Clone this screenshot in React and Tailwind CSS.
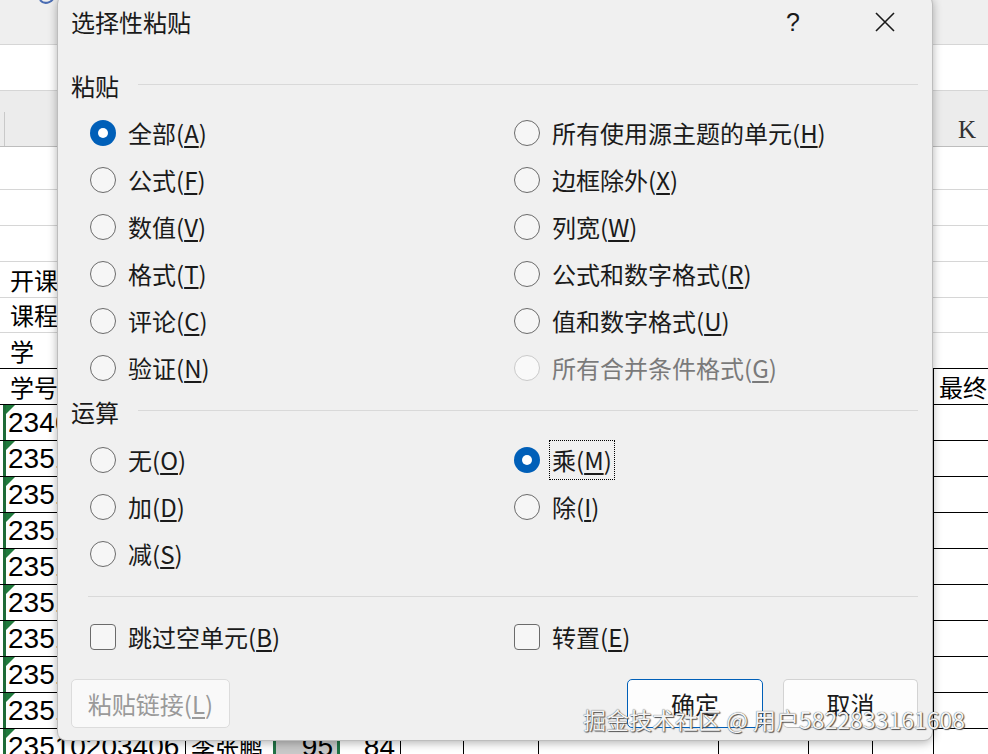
import clsx from "clsx";

const cjk = "font-['Noto_Sans_CJK_SC','Noto_Sans',sans-serif]";

function Mn({ children }) {
  return <span className="underline decoration-[1.5px] underline-offset-[3px]">{children}</span>;
}

function Label({ text, k }) {
  return (
    <>
      {text}(<Mn>{k}</Mn>)
    </>
  );
}

function Radio({ checked, disabled }) {
  if (checked) {
    return (
      <span className="w-[26px] h-[26px] shrink-0 rounded-full bg-[#005fb8] flex items-center justify-center">
        <span className="w-[10px] h-[10px] rounded-full bg-white" />
      </span>
    );
  }
  return (
    <span
      className={clsx(
        "w-[26px] h-[26px] shrink-0 rounded-full border-[1.5px]",
        disabled ? "border-[#cacaca] bg-[#f9f9f9]" : "border-[#6b6b6b] bg-[#f6f6f6]"
      )}
    />
  );
}

function Option({ text, k, checked, disabled, focus }) {
  return (
    <div className="h-[47px] flex items-center">
      <Radio checked={checked} disabled={disabled} />
      {focus ? (
        <span className="ml-[10px] px-[2px] h-[38px] flex items-center outline-1 outline-dotted outline-black">
          <Label text={text} k={k} />
        </span>
      ) : (
        <span className={clsx("ml-[12px]", disabled && "text-[#7a7a7a]")}>
          <Label text={text} k={k} />
        </span>
      )}
    </div>
  );
}

function Check({ text, k }) {
  return (
    <div className="h-[47px] flex items-center">
      <span className="w-[26px] h-[26px] shrink-0 rounded-[4px] border-[1.5px] border-[#6b6b6b] bg-[#f6f6f6]" />
      <span className="ml-[12px]">
        <Label text={text} k={k} />
      </span>
    </div>
  );
}

function Section({ title }) {
  return (
    <div className="h-[34px] flex items-center pl-[13px] pr-[14px]">
      <span>{title}</span>
      <div className="flex-1 h-px bg-[#d9d9d9] ml-[19px] mb-[4px]" />
    </div>
  );
}

function Triangle() {
  return (
    <span className="absolute top-0 left-0 w-0 h-0 border-t-[9px] border-t-[#1f7a3c] border-r-[9px] border-r-transparent" />
  );
}

function SheetRow({ h = "h-[36px]", line = "border-[#d6d6d6]", left, right, num, tri, rightLine }) {
  return (
    <div className={clsx("flex border-b", h, line)}>
      <div className="w-[185px] pl-[3px] flex">
        <div
          className={clsx(
            "flex-1 relative flex items-center overflow-hidden whitespace-nowrap",
            num ? "border-l-[3px] border-[#1d6b37] pl-[2px] font-['Liberation_Sans',sans-serif] text-[28px]" : "pl-[7px] text-[24px]"
          )}
        >
          {tri && <Triangle />}
          {left}
        </div>
      </div>
      <div className="flex-1" />
      <div
        className={clsx(
          "w-[55px] flex items-center pl-[5px] text-[24px] whitespace-nowrap overflow-hidden",
          rightLine && "border-l border-black"
        )}
      >
        {right}
      </div>
    </div>
  );
}

export default function App() {
  const ids = ["2346", "2351", "2351", "2351", "2351", "2351", "2351", "2351", "2351"];

  return (
    <div className={clsx("relative w-[988px] h-[754px] overflow-hidden bg-white text-black leading-none", cjk)}>
      {/* spreadsheet behind */}
      <div className="flex flex-col">
        <div className="h-[45px] bg-[#efefef] border-b border-[#d6d6d6] relative">
          <svg className="absolute left-[36px] top-[-14px]" width="22" height="22" viewBox="0 0 22 22">
            <path d="M4 14 A 8 8 0 0 0 18 8" fill="none" stroke="#4a6db3" strokeWidth="2" />
          </svg>
        </div>
        <div className="h-[46px] border-b border-[#d6d6d6]" />
        <div className="h-[56px] bg-[#ececec] border-b border-[#bdbdbd] flex flex-col justify-end">
          <div className="h-[34px] flex">
            <div className="w-[5px] border-r border-[#c9c9c9]" />
            <div className="flex-1" />
            <div className="w-[55px] flex items-center pl-[25px] font-['Liberation_Serif',serif] text-[25px] text-[#333]">
              K
            </div>
          </div>
        </div>
        <SheetRow h="h-[43px]" />
        <SheetRow />
        <SheetRow />
        <SheetRow left="开课" />
        <SheetRow h="h-[35px]" left="课程" />
        <SheetRow line="border-black" left="学" />
        <SheetRow line="border-black" left="学号" right="最终" rightLine />
        {ids.map((id, i) => (
          <SheetRow key={i} line="border-black" left={id} num tri rightLine />
        ))}
        <div className="h-[36px] flex">
          <div className="w-[185px] pl-[3px] flex">
            <div className="flex-1 relative flex items-center border-l-[3px] border-[#1d6b37] pl-[2px] font-['Liberation_Sans',sans-serif] text-[28px] whitespace-nowrap">
              <Triangle />
              23510203406
            </div>
          </div>
          <div className="w-[88px] border-l border-black flex items-center pl-[5px] text-[24px]">李张鹏</div>
          <div className="w-[67px] border-x-[3px] border-[#217346] bg-[#c8c8c8] flex items-center justify-end pr-[4px] font-['Liberation_Sans',sans-serif] text-[28px]">
            95
          </div>
          <div className="w-[60px] flex items-center justify-end pr-[5px] font-['Liberation_Sans',sans-serif] text-[28px]">
            84
          </div>
          <div className="w-[63px] border-l border-black" />
          <div className="w-[75px] border-l border-black" />
          <div className="w-[180px] border-l border-black" />
          <div className="w-[90px] border-l border-black" />
          <div className="w-[64px] border-l border-black" />
          <div className="w-[61px] border-l border-black" />
          <div className="flex-1 border-l border-black" />
        </div>
      </div>

      {/* dialog */}
      <div className="absolute left-[57px] top-[-5px] w-[876px] h-[746px] bg-[#f0f0f0] rounded-[9px] border border-[#bdbdbd] shadow-[0_2px_10px_rgba(0,0,0,0.3)] flex flex-col text-[24px] text-[#1a1a1a]">
        <div className="h-[52px] flex items-center pl-[13px] pr-[37px]">
          <span className="flex-1">选择性粘贴</span>
          <span className="w-[20px] text-center font-['Liberation_Sans',sans-serif] text-[25px]">?</span>
          <svg className="ml-[72px]" width="20" height="20" viewBox="0 0 20 20">
            <path d="M1 1 L19 19 M19 1 L1 19" stroke="#1a1a1a" strokeWidth="1.6" />
          </svg>
        </div>

        <div className="mt-[21px]">
          <Section title="粘贴" />
        </div>
        <div className="mt-[6px] pl-[32px] grid grid-cols-[424px_1fr]">
          <Option text="全部" k="A" checked />
          <Option text="所有使用源主题的单元" k="H" />
          <Option text="公式" k="F" />
          <Option text="边框除外" k="X" />
          <Option text="数值" k="V" />
          <Option text="列宽" k="W" />
          <Option text="格式" k="T" />
          <Option text="公式和数字格式" k="R" />
          <Option text="评论" k="C" />
          <Option text="值和数字格式" k="U" />
          <Option text="验证" k="N" />
          <Option text="所有合并条件格式" k="G" disabled />
        </div>

        <div className="mt-[4px]">
          <Section title="运算" />
        </div>
        <div className="mt-[7px] pl-[32px] grid grid-cols-[424px_1fr]">
          <Option text="无" k="O" />
          <Option text="乘" k="M" checked focus />
          <Option text="加" k="D" />
          <Option text="除" k="I" />
          <Option text="减" k="S" />
        </div>

        <div className="mt-[19px] ml-[30px] mr-[14px] h-px bg-[#d9d9d9]" />

        <div className="mt-[16px] pl-[32px] grid grid-cols-[424px_1fr]">
          <Check text="跳过空单元" k="B" />
          <Check text="转置" k="E" />
        </div>

        <div className="mt-[19px] pl-[13px] pr-[14px] flex">
          <button className="w-[159px] h-[49px] rounded-[5px] border border-[#dcdcdc] bg-[#f9f9f9] text-[#9a9a9a]">
            <Label text="粘贴链接" k="L" />
          </button>
          <div className="flex-1" />
          <button className="w-[136px] h-[49px] rounded-[5px] border border-[#005fb8] bg-[#fdfdfd]">确定</button>
          <button className="ml-[20px] w-[135px] h-[49px] rounded-[5px] border border-[#d3d3d3] border-b-[#bdbdbd] bg-[#fdfdfd]">
            取消
          </button>
        </div>
      </div>

      {/* watermark */}
      <div className="absolute left-[583px] top-[704px] leading-[30px] text-[23px] text-[#f4f4f4] whitespace-nowrap [text-shadow:0_0_1px_#333,1px_1px_1px_#555]">
        掘金技术社区 @ 用户5822833161608
      </div>
    </div>
  );
}
